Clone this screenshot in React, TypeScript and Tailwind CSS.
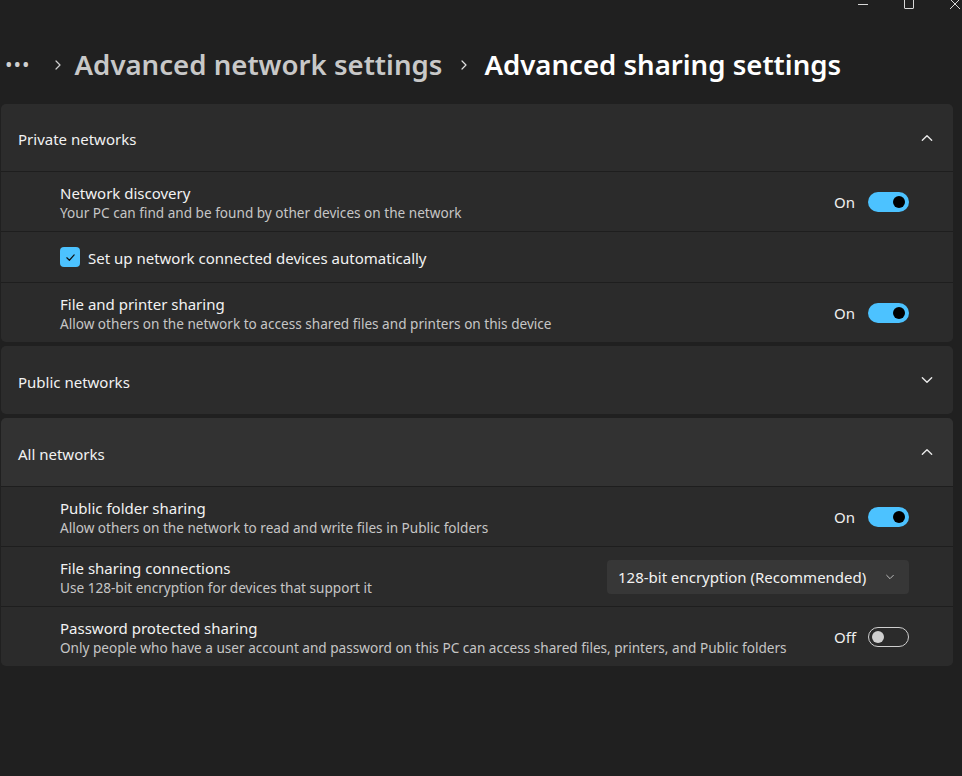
import React from "react";

const font = { fontFamily: '"Noto Sans", "Open Sans", sans-serif' };

function Chevron({ dir, className }: { dir: "up" | "down" | "right"; className?: string }) {
  const d =
    dir === "up" ? "M2 8 L6 4 L10 8" : dir === "down" ? "M2 4 L6 8 L10 4" : "M4 2 L8 6 L4 10";
  return (
    <svg viewBox="0 0 12 12" className={className} fill="none" stroke="currentColor" strokeWidth="1.2" strokeLinecap="round" strokeLinejoin="round">
      <path d={d} />
    </svg>
  );
}

function Toggle({ on }: { on: boolean }) {
  return (
    <div className="flex items-center gap-[10px]">
      <span className="w-[24px] pt-[2px] text-[15px] text-[#f0f0f0]">{on ? "On" : "Off"}</span>
      <div
        className={
          on
            ? "flex h-[20px] w-[41px] items-center justify-end rounded-full bg-[#4cc2ff] pr-[4px]"
            : "flex h-[20px] w-[41px] items-center justify-start rounded-full border border-[#cfcfcf] pl-[3px]"
        }
      >
        <div className={on ? "h-[12px] w-[12px] rounded-full bg-[#000000]" : "h-[12px] w-[12px] rounded-full bg-[#d0d0d0]"} />
      </div>
    </div>
  );
}

function Header({ title, open, light, tall }: { title: string; open: boolean; light?: boolean; tall?: boolean }) {
  return (
    <div
      className={`flex items-center justify-between pl-[17px] pr-[19px] ${tall ? "h-[68px]" : "h-[67px]"} ${
        light ? "bg-[#323232]" : "bg-[#2c2c2c]"
      }`}
    >
      <span className="pt-[4px] text-[15px] text-[#f2f2f2]">{title}</span>
      <Chevron dir={open ? "up" : "down"} className="h-[14px] w-[14px] text-[#e8e8e8]" />
    </div>
  );
}

function Row({ title, desc, right }: { title: string; desc: string; right: React.ReactNode }) {
  return (
    <div className="flex h-[60px] items-center justify-between border-t border-[#1e1e1e] bg-[#2b2b2b] pl-[59px] pr-[44px]">
      <div className="flex flex-col pt-[2px]">
        <span className="text-[15px] leading-[20px] text-[#f2f2f2]">{title}</span>
        <span className="text-[13.6px] leading-[20px] text-[#c6c6c6]">{desc}</span>
      </div>
      {right}
    </div>
  );
}

export default function App() {
  return (
    <div className="relative h-[776px] w-[962px] overflow-hidden bg-[#202020]" style={font}>
      {/* caption buttons */}
      <div className="absolute right-[-16px] top-[-3px] flex items-center">
        <div className="flex h-[14px] w-[46px] items-center justify-center">
          <div className="h-px w-[10px] bg-[#d8d8d8]" />
        </div>
        <div className="flex h-[14px] w-[46px] items-center justify-center">
          <div className="h-[10px] w-[10px] rounded-[1px] border border-[#d8d8d8]" />
        </div>
        <div className="flex h-[14px] w-[46px] items-center justify-center">
          <svg viewBox="0 0 10 10" className="h-[10px] w-[10px]" stroke="#d8d8d8" strokeWidth="1">
            <path d="M0 0 L10 10 M10 0 L0 10" />
          </svg>
        </div>
      </div>

      {/* breadcrumb */}
      <div className="flex h-[104px] items-center pl-[5px] pt-[26px]">
        <span className="text-[20px] leading-none tracking-[1px] text-[#cfcfcf]">•••</span>
        <Chevron dir="right" className="ml-[21px] h-[12px] w-[12px] text-[#cfcfcf]" />
        <span className="ml-[11px] text-[27.6px] font-semibold text-[#c8c8c8]">Advanced network settings</span>
        <Chevron dir="right" className="ml-[16px] h-[12px] w-[12px] text-[#e0e0e0]" />
        <span className="ml-[14px] text-[27.6px] font-semibold text-white">Advanced sharing settings</span>
      </div>

      <div className="flex w-[953px] flex-col gap-[4px] pl-[1px]">
        <div className="overflow-hidden rounded-[5px]">
          <Header title="Private networks" open />
          <Row
            title="Network discovery"
            desc="Your PC can find and be found by other devices on the network"
            right={<Toggle on />}
          />
          <div className="flex h-[51px] items-center gap-[8px] border-t border-[#1e1e1e] bg-[#2b2b2b] pl-[59px]">
            <div className="flex h-[20px] w-[20px] items-center justify-center rounded-[4px] bg-[#4cc2ff]">
              <svg viewBox="0 0 12 12" className="h-[11px] w-[11px]" fill="none" stroke="#111" strokeWidth="1.3" strokeLinecap="round" strokeLinejoin="round">
                <path d="M2 6.3 L4.8 9 L10 3.2" />
              </svg>
            </div>
            <span className="pt-[2px] text-[15px] text-[#f2f2f2]">Set up network connected devices automatically</span>
          </div>
          <Row
            title="File and printer sharing"
            desc="Allow others on the network to access shared files and printers on this device"
            right={<Toggle on />}
          />
        </div>

        <div className="overflow-hidden rounded-[5px]">
          <Header title="Public networks" open={false} tall />
        </div>

        <div className="overflow-hidden rounded-[5px]">
          <Header title="All networks" open light tall />
          <Row
            title="Public folder sharing"
            desc="Allow others on the network to read and write files in Public folders"
            right={<Toggle on />}
          />
          <Row
            title="File sharing connections"
            desc="Use 128-bit encryption for devices that support it"
            right={
              <div className="flex h-[34px] w-[302px] items-center justify-between rounded-[4px] bg-[#373737] pl-[11px] pr-[14px]">
                <span className="pt-[2px] text-[15px] text-[#f2f2f2]">128-bit encryption (Recommended)</span>
                <Chevron dir="down" className="h-[10px] w-[10px] text-[#bdbdbd]" />
              </div>
            }
          />
          <Row
            title="Password protected sharing"
            desc="Only people who have a user account and password on this PC can access shared files, printers, and Public folders"
            right={<Toggle on={false} />}
          />
        </div>
      </div>
    </div>
  );
}
